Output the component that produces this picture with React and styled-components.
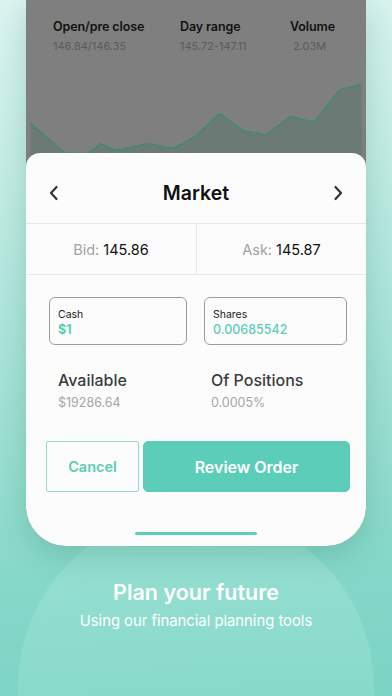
import React from "react";
import styled, { createGlobalStyle } from "styled-components";

const Global = createGlobalStyle`
  html, body { margin: 0; padding: 0; }
  body { font-family: Inter, "Noto Sans", sans-serif; }
  * { box-sizing: border-box; }
`;

const Page = styled.div`
  position: relative;
  width: 392px;
  height: 696px;
  overflow: hidden;
  background: linear-gradient(175deg, #dcf4f0 0%, #c2ece4 25%, #a2e1d5 55%, #86d8c9 80%, #7cd4c4 100%);
  display: flex;
  flex-direction: column;
  align-items: center;
  &::before {
    content: "";
    position: absolute;
    left: 18px;
    top: 510px;
    width: 356px;
    height: 356px;
    border-radius: 50%;
    background: linear-gradient(180deg, rgba(170, 232, 220, 0.45), rgba(140, 220, 205, 0.25));
  }
`;

const Phone = styled.div`
  position: relative;
  z-index: 1;
  width: 340px;
  height: 546px;
  flex: none;
  background: #7f7f7f;
  border-radius: 0 0 40px 40px;
  overflow: hidden;
  display: flex;
  flex-direction: column;
  box-shadow: 0 10px 30px rgba(40, 120, 105, 0.25);
`;

const Backdrop = styled.div`
  height: 167px;
  flex: none;
  display: flex;
  flex-direction: column;
`;

const Stats = styled.div`
  display: grid;
  grid-template-columns: 127px 110px 1fr;
  padding: 19px 0 0 27px;
`;

const Stat = styled.div`
  display: flex;
  flex-direction: column;
  gap: 5px;
`;

const StatLabel = styled.div`
  font-size: 12.5px;
  font-weight: 600;
  color: #111;
  letter-spacing: -0.1px;
`;

const StatValue = styled.div`
  font-size: 11px;
  color: #5b5b5b;
  padding-left: ${(p) => p.$indent || 0}px;
`;

const ChartSvg = styled.svg`
  display: block;
  margin-top: auto;
`;

const Sheet = styled.div`
  position: relative;
  margin-top: -14px;
  flex: 1;
  background: #fcfcfc;
  border-radius: 14px 14px 0 0;
  display: flex;
  flex-direction: column;
`;

const TitleRow = styled.div`
  height: 71px;
  display: flex;
  align-items: center;
  justify-content: space-between;
  padding: 10px 22px 0 22px;
  border-bottom: 1px solid #e8e8e8;
`;

const Title = styled.div`
  font-size: 19.5px;
  font-weight: 600;
  color: #111;
`;

const QuoteRow = styled.div`
  display: grid;
  grid-template-columns: 1fr 1fr;
  height: 51px;
  border-bottom: 1px solid #e8e8e8;
`;

const Quote = styled.div`
  display: flex;
  align-items: center;
  justify-content: center;
  font-size: 14.5px;
  color: #111;
  & + & { border-left: 1px solid #e8e8e8; }
  span { color: #a2a2a2; margin-right: 4px; }
`;

const Fields = styled.div`
  display: grid;
  grid-template-columns: 138px 143px;
  gap: 17px;
  padding: 22px 0 0 23px;
`;

const Field = styled.div`
  height: 48px;
  border: 1px solid #9c9c9c;
  border-radius: 6px;
  padding: 10px 0 0 8px;
  display: flex;
  flex-direction: column;
  gap: 1px;
`;

const FieldLabel = styled.div`
  font-size: 10.5px;
  color: #222;
`;

const FieldValue = styled.div`
  font-size: 12.5px;
  font-weight: ${(p) => p.$weight || 500};
  color: #5ccdb8;
`;

const Infos = styled.div`
  display: grid;
  grid-template-columns: 153px 1fr;
  padding: 25px 0 0 32px;
`;

const Info = styled.div`
  display: flex;
  flex-direction: column;
  gap: 5px;
`;

const InfoTitle = styled.div`
  font-size: 16px;
  font-weight: 500;
  color: #3c3c3c;
`;

const InfoValue = styled.div`
  font-size: 12.5px;
  color: #a6a6a6;
`;

const Buttons = styled.div`
  display: flex;
  gap: 4px;
  padding: 31px 16px 0 20px;
`;

const Button = styled.div`
  height: 51px;
  display: flex;
  align-items: center;
  justify-content: center;
  font-size: ${(p) => (p.$primary ? 16 : 14.5)}px;
  font-weight: 600;
  border-radius: ${(p) => (p.$primary ? 5 : 2)}px;
  color: ${(p) => (p.$primary ? "#fff" : "#5ccdb8")};
  background: ${(p) => (p.$primary ? "#5ccdb8" : "transparent")};
  border: 1px solid ${(p) => (p.$primary ? "#5ccdb8" : "#8fdccd")};
  width: ${(p) => p.$width}px;
  flex: ${(p) => (p.$primary ? 1 : "none")};
`;

const Home = styled.div`
  margin: auto auto 11px;
  width: 122px;
  height: 3px;
  border-radius: 2px;
  background: #5ccdb8;
`;

const Promo = styled.div`
  position: relative;
  z-index: 1;
  display: flex;
  flex-direction: column;
  align-items: center;
  padding-top: 33px;
  gap: 7px;
  color: #fff;
`;

const PromoTitle = styled.div`
  font-size: 21.5px;
  font-weight: 600;
`;

const PromoText = styled.div`
  font-size: 14.8px;
  font-weight: 400;
`;

const Chevron = ({ dir }) => (
  <svg width="12" height="16" viewBox="0 0 12 16">
    <path
      d={dir === "left" ? "M8.5 2 L3 8 L8.5 14" : "M3.5 2 L9 8 L3.5 14"}
      fill="none"
      stroke="#333"
      strokeWidth="2.2"
      strokeLinecap="round"
      strokeLinejoin="round"
    />
  </svg>
);

const pts = [
  [0, 122], [36, 153], [59, 153], [72, 143], [87, 150], [121, 143], [146, 148],
  [169, 136], [194, 112], [219, 130], [242, 134], [267, 115], [291, 121], [317, 88], [340, 82],
];

const Chart = () => {
  const top = 50;
  const line = pts.map(([x, y], i) => `${i ? "L" : "M"}${x} ${y - top}`).join(" ");
  return (
    <ChartSvg width="340" height="117" viewBox="0 0 340 117">
      <path d={`${line} L340 117 L0 117 Z`} fill="#6c7a76" />
      <path d={line} fill="none" stroke="#3d8a78" strokeWidth="1.4" />
    </ChartSvg>
  );
};

export default function App() {
  return (
    <Page>
      <Global />
      <Phone>
        <Backdrop>
          <Stats>
            <Stat>
              <StatLabel>Open/pre close</StatLabel>
              <StatValue>146.84/146.35</StatValue>
            </Stat>
            <Stat>
              <StatLabel>Day range</StatLabel>
              <StatValue>145.72-147.11</StatValue>
            </Stat>
            <Stat>
              <StatLabel>Volume</StatLabel>
              <StatValue $indent={3}>2.03M</StatValue>
            </Stat>
          </Stats>
          <Chart />
        </Backdrop>
        <Sheet>
          <TitleRow>
            <Chevron dir="left" />
            <Title>Market</Title>
            <Chevron dir="right" />
          </TitleRow>
          <QuoteRow>
            <Quote><span>Bid:</span>145.86</Quote>
            <Quote><span>Ask:</span>145.87</Quote>
          </QuoteRow>
          <Fields>
            <Field>
              <FieldLabel>Cash</FieldLabel>
              <FieldValue $weight={700}>$1</FieldValue>
            </Field>
            <Field>
              <FieldLabel>Shares</FieldLabel>
              <FieldValue>0.00685542</FieldValue>
            </Field>
          </Fields>
          <Infos>
            <Info>
              <InfoTitle>Available</InfoTitle>
              <InfoValue>$19286.64</InfoValue>
            </Info>
            <Info>
              <InfoTitle>Of Positions</InfoTitle>
              <InfoValue>0.0005%</InfoValue>
            </Info>
          </Infos>
          <Buttons>
            <Button $width={93}>Cancel</Button>
            <Button $primary>Review Order</Button>
          </Buttons>
          <Home />
        </Sheet>
      </Phone>
      <Promo>
        <PromoTitle>Plan your future</PromoTitle>
        <PromoText>Using our financial planning tools</PromoText>
      </Promo>
    </Page>
  );
}
